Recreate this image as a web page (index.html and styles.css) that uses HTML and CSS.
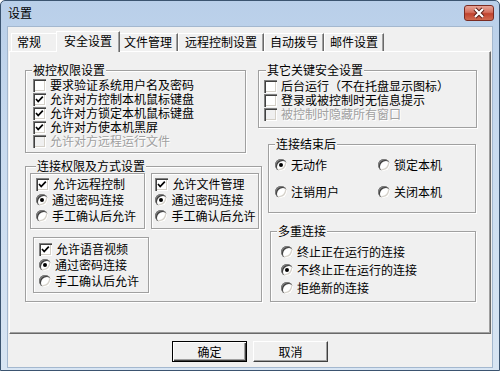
FILE: index.html
```html
<!DOCTYPE html>
<html lang="zh-CN">
<head>
  <meta charset="UTF-8" />
  <title>设置</title>
  <link rel="stylesheet" href="styles.css">
</head>
<body>

  <div class="window">
    <div class="titlebar">
      <span class="title">设置</span>
      <div class="close">
        <svg viewBox="0 0 30 16" width="30" height="16">
          <path class="x-shadow" d="M11 4 L19 12 M19 4 L11 12" />
          <path class="x-mark" d="M11 4 L19 12 M19 4 L11 12" />
        </svg>
      </div>
    </div>

    <div class="client">
      <div class="tabs">
        <div class="tab first">常规</div>
        <div class="tab active">安全设置</div>
        <div class="tab">文件管理</div>
        <div class="tab wide">远程控制设置</div>
        <div class="tab">自动拨号</div>
        <div class="tab">邮件设置</div>
      </div>

      <div class="panel">
        <div class="col-left">
          <fieldset class="group g-controlled">
            <legend>被控权限设置</legend>
            <div class="list">
              <label class="opt"><span class="cb"></span>要求验证系统用户名及密码</label>
              <label class="opt"><span class="cb"><svg viewBox="0 0 13 13"><polyline points="3,6 5.2,8.5 9.8,3.6" /></svg></span>允许对方控制本机鼠标键盘</label>
              <label class="opt"><span class="cb"><svg viewBox="0 0 13 13"><polyline points="3,6 5.2,8.5 9.8,3.6" /></svg></span>允许对方锁定本机鼠标键盘</label>
              <label class="opt"><span class="cb"><svg viewBox="0 0 13 13"><polyline points="3,6 5.2,8.5 9.8,3.6" /></svg></span>允许对方使本机黑屏</label>
              <label class="opt disabled"><span class="cb"></span>允许对方远程运行文件</label>
            </div>
          </fieldset>

          <fieldset class="group g-connect">
            <legend>连接权限及方式设置</legend>
            <div class="subs">
              <div class="sub">
                <label class="opt row"><span class="cb"><svg viewBox="0 0 13 13"><polyline points="3,6 5.2,8.5 9.8,3.6" /></svg></span>允许远程控制</label>
                <label class="opt row"><span class="rb on"></span>通过密码连接</label>
                <label class="opt row"><span class="rb"></span>手工确认后允许</label>
              </div>
              <div class="sub narrow">
                <label class="opt row"><span class="cb"><svg viewBox="0 0 13 13"><polyline points="3,6 5.2,8.5 9.8,3.6" /></svg></span>允许文件管理</label>
                <label class="opt row"><span class="rb on"></span>通过密码连接</label>
                <label class="opt row"><span class="rb"></span>手工确认后允许</label>
              </div>
            </div>
            <div class="sub voice">
              <label class="opt row"><span class="cb"><svg viewBox="0 0 13 13"><polyline points="3,6 5.2,8.5 9.8,3.6" /></svg></span>允许语音视频</label>
              <label class="opt row"><span class="rb on"></span>通过密码连接</label>
              <label class="opt row"><span class="rb"></span>手工确认后允许</label>
            </div>
          </fieldset>
        </div>

        <div class="col-right">
          <fieldset class="group g-other">
            <legend>其它关键安全设置</legend>
            <div class="list">
              <label class="opt"><span class="cb"></span>后台运行（不在托盘显示图标）</label>
              <label class="opt"><span class="cb"></span>登录或被控制时无信息提示</label>
              <label class="opt disabled"><span class="cb"></span>被控制时隐藏所有窗口</label>
            </div>
          </fieldset>

          <fieldset class="group g-after">
            <legend>连接结束后</legend>
            <div class="choices">
              <label class="opt"><span class="rb on"></span>无动作</label>
              <label class="opt"><span class="rb"></span>锁定本机</label>
              <label class="opt"><span class="rb"></span>注销用户</label>
              <label class="opt"><span class="rb"></span>关闭本机</label>
            </div>
          </fieldset>

          <fieldset class="group g-multi">
            <legend>多重连接</legend>
            <div class="list">
              <label class="opt row"><span class="rb"></span>终止正在运行的连接</label>
              <label class="opt row"><span class="rb on"></span>不终止正在运行的连接</label>
              <label class="opt row"><span class="rb"></span>拒绝新的连接</label>
            </div>
          </fieldset>
        </div>
      </div>

      <div class="btns">
        <button type="button" class="btn default">确定</button>
        <button type="button" class="btn">取消</button>
      </div>
    </div>
  </div>

</body>
</html>
```

FILE: styles.css
```css
body {
  margin: 0;
  font-family: "Noto Sans CJK SC", "Liberation Sans", sans-serif;
  font-size: 12px;
  line-height: 14px;
  color: #000;
  background: #fff;
}

.window {
  width: 500px;
  height: 371px;
  box-sizing: border-box;
  border: 1px solid #3b5470;
  border-radius: 5px 5px 0 0;
  background: linear-gradient(180deg, #b9cfe9 0%, #c9dbef 40%, #d8e5f3 100%);
}

.titlebar {
  display: flex;
  align-items: center;
  height: 26px;
  padding: 0 0 2px 7px;
  box-sizing: border-box;
}

.title {
  line-height: 14px;
}

.close {
  width: 30px;
  height: 16px;
  margin-left: auto;
  margin-right: 5px;
  box-sizing: border-box;
  border: 1px solid #7a2b22;
  border-radius: 3px;
  background: linear-gradient(180deg, #e8a497 0%, #d4705e 45%, #c0432e 55%, #d06a50 100%);
}

.close svg {
  display: block;
  margin: -1px;
}

.x-shadow {
  stroke: #5a1c14;
  stroke-width: 4;
  fill: none;
}

.x-mark {
  stroke: #fff;
  stroke-width: 2.2;
  fill: none;
}

.client {
  margin: 0 7px;
  height: 340px;
  background: #f0f0f0;
  box-shadow: 0 0 0 1px #a4b8cf;
}

/* tabs */

.tabs {
  display: flex;
  align-items: flex-end;
  height: 20px;
  padding: 4px 0 0 3px;
}

.tab {
  height: 18px;
  line-height: 16px;
  padding: 0 5px;
  box-sizing: border-box;
  border-top: 1px solid #fff;
  border-left: 1px solid #fff;
  border-right: 1px solid #696969;
  box-shadow: inset -1px 0 #a0a0a0;
  white-space: nowrap;
}

.tab.first {
  width: 47px;
  padding-left: 5px;
  border-right: none;
  box-shadow: none;
}

.tab.wide {
  padding: 0 6px;
}

.tab.active {
  position: relative;
  z-index: 1;
  height: 21px;
  line-height: 17px;
  margin: 0 -2px -1px -2px;
  padding: 0 7px;
  background: #f0f0f0;
}

.panel {
  display: flex;
  margin-left: 1px;
  width: 482px;
  height: 283px;
  box-sizing: border-box;
  border: 1px solid;
  border-color: #fff #696969 #696969 #fff;
  box-shadow: inset -1px -1px #a0a0a0;
  padding: 11px 0 0 15px;
}

.col-left {
  width: 237px;
  flex: none;
}

.col-right {
  width: 219px;
  flex: none;
  margin-left: -4px;
}

/* group boxes */

.group {
  margin: 0;
  padding: 0;
  min-width: 0;
  box-sizing: border-box;
  border: 1px solid #a0a0a0;
  box-shadow: inset 1px 1px #fff, 1px 1px #fff;
}

.group legend {
  margin-left: 6px;
  padding: 0 1px;
  line-height: 14px;
  background: #f0f0f0;
}

.g-controlled {
  width: 221px;
}

.g-controlled .list {
  padding: 1px 0 4px 7px;
}

.g-connect {
  width: 237px;
  margin-top: 6px;
  padding: 0 2px 8px 4px;
}

.subs {
  display: flex;
  gap: 6px;
}

.sub {
  width: 116px;
  height: 56px;
  box-sizing: border-box;
  padding: 2px 0 0 5px;
  border: 1px solid #a0a0a0;
  box-shadow: inset 1px 1px #fff, 1px 1px #fff;
}

.sub.narrow {
  width: 108px;
  padding-left: 3px;
}

.sub.voice {
  margin: 8px 0 0 3px;
  padding-top: 3px;
}

.opt.row {
  height: 16px;
}

.g-other {
  width: 219px;
}

.g-other legend {
  margin-left: 7px;
}

.g-other .list {
  padding: 2px 0 6px 5px;
}

.g-after {
  width: 208px;
  margin: 9px 0 0 10px;
}

.choices {
  display: grid;
  grid-template-columns: 103px 1fr;
  row-gap: 13px;
  padding: 7px 0 13px 6px;
}

.g-multi {
  width: 206px;
  margin: 11px 0 0 12px;
}

.g-multi .list {
  padding: 5px 0 4px 10px;
}

.g-multi .opt.row {
  height: 18px;
}

/* check boxes and radio buttons */

.opt {
  display: flex;
  align-items: center;
  height: 14px;
  line-height: 14px;
  white-space: nowrap;
}

.opt.disabled {
  color: #a0a0a0;
  text-shadow: 1px 1px #fff;
}

.cb {
  width: 13px;
  height: 13px;
  flex: none;
  margin-right: 4px;
  background: #fff;
  box-shadow: inset 1px 1px #808080, inset 2px 2px #404040, inset -1px -1px #fff, inset -2px -2px #d4d0c8;
}

.disabled .cb {
  background: #f0f0f0;
}

.cb svg {
  display: block;
  width: 13px;
  height: 13px;
}

.cb polyline {
  fill: none;
  stroke: #000;
  stroke-width: 1.7;
}

.rb {
  width: 12px;
  height: 12px;
  flex: none;
  margin-right: 4px;
  border-radius: 50%;
  background: #fff;
  box-shadow: inset 1px 1px #808080, inset 2px 2px #404040, inset -1px -1px #fff, inset -2px -2px #d4d0c8;
}

.rb.on::after {
  content: "";
  display: block;
  width: 4px;
  height: 4px;
  margin: 4px;
  border-radius: 50%;
  background: #000;
}

/* buttons */

.btns {
  display: flex;
  justify-content: center;
  gap: 6px;
  margin-top: 7px;
}

.btn {
  width: 75px;
  height: 21px;
  box-sizing: border-box;
  padding: 0;
  font: inherit;
  color: #000;
  background: #f0f0f0;
  border: 1px solid;
  border-color: #fff #404040 #404040 #fff;
  box-shadow: inset -1px -1px #a0a0a0;
}

.btn.default {
  border: 1px solid #000;
  box-shadow: inset 1px 1px #fff, inset -1px -1px #404040, inset -2px -2px #a0a0a0;
}
```
